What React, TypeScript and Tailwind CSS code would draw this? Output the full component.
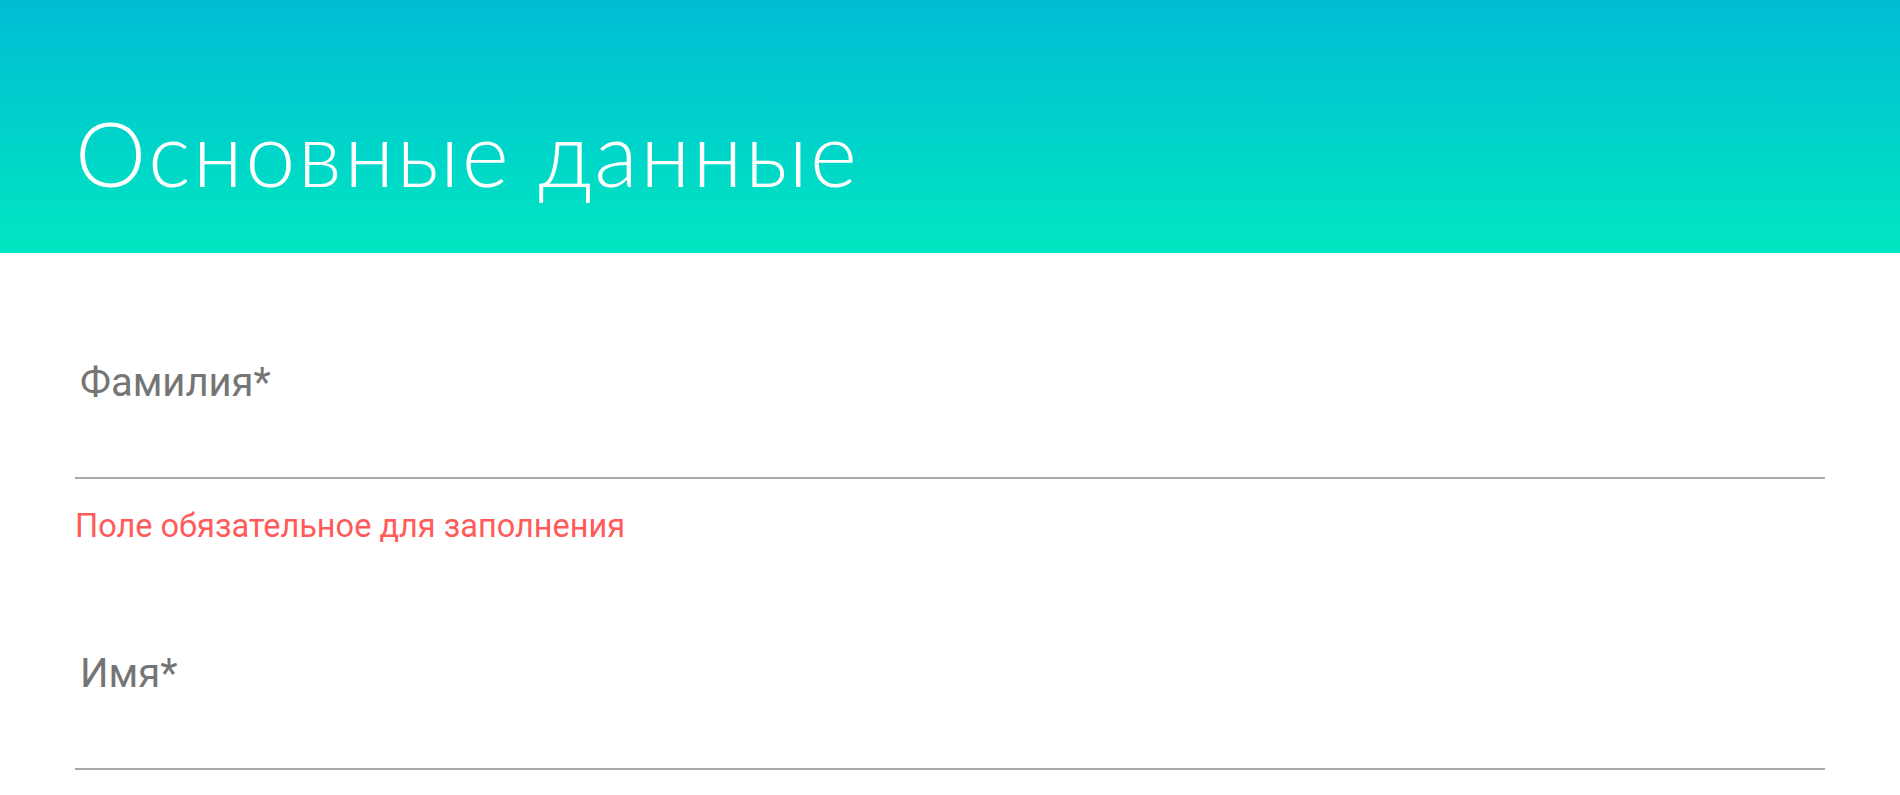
export default function App() {
  return (
    <div className="min-h-screen bg-white font-['Roboto',sans-serif]">
      {/* Header */}
      <header className="h-[253px] bg-gradient-to-b from-[#00bcd4] to-[#00e6c0] px-[75px] pt-[98px]">
        <h1 className="font-['Lato',sans-serif] font-light text-[90px] leading-[108px] tracking-[2.4px] text-white">
          Основные данные
        </h1>
      </header>

      {/* Form */}
      <div className="px-[75px] pt-[106px]">
        <div className="border-b-2 border-[#a9a9a9]">
          <p className="pl-[5px] pb-[70px] text-[40px] leading-[48px] text-[#757575]">Фамилия*</p>
        </div>
        <p className="pt-[28px] text-[32.5px] leading-[38px] text-[#ff5b5b]">Поле обязательное для заполнения</p>

        <div className="mt-[105px] border-b-2 border-[#a9a9a9]">
          <p className="pl-[5px] pb-[70px] text-[40px] leading-[48px] text-[#757575]">Имя*</p>
        </div>
      </div>
    </div>
  )
}
